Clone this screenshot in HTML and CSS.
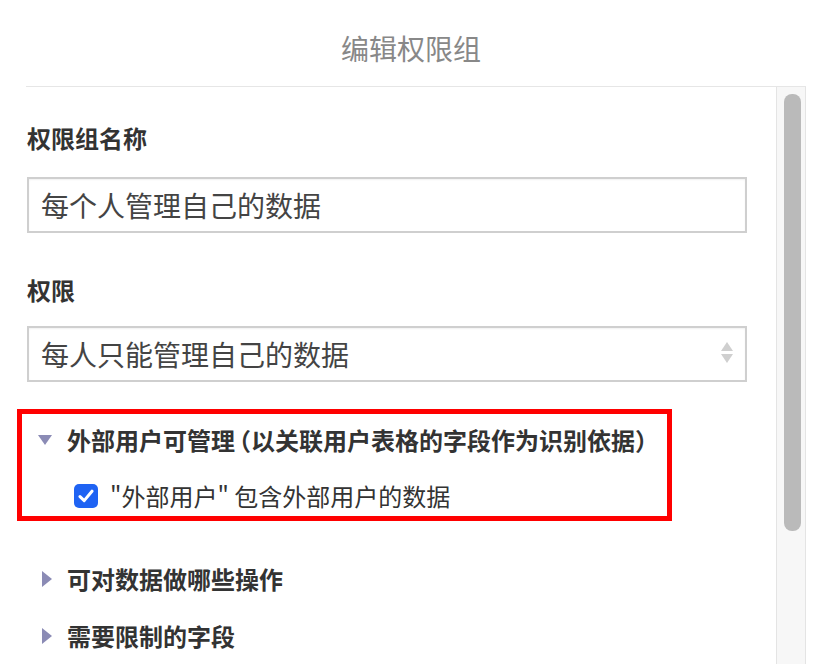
FILE: index.html
```
<!DOCTYPE html>
<html lang="zh-CN">

<head>
    <meta charset="UTF-8">
    <meta name="viewport" content="width=device-width, initial-scale=1.0">
    <title>编辑权限组</title>
    <link rel="stylesheet" href="styles.css">
</head>

<body>
    <div class="dialog">
        <h1 class="dialog-title">编辑权限组</h1>
        <div class="dialog-body">
            <div class="form">
                <label class="field-label" for="groupName">权限组名称</label>
                <input type="text" id="groupName" class="text-input" value="每个人管理自己的数据">

                <label class="field-label label-gap" for="scope">权限</label>
                <div class="select-wrap">
                    <select id="scope" class="select-input">
                        <option>每人只能管理自己的数据</option>
                        <option>所有人可以管理所有数据</option>
                    </select>
                    <span class="select-arrows"><i class="up"></i><i class="down"></i></span>
                </div>

                <!-- highlighted section -->
                <div class="annot">
                    <div class="section-head open">
                        <span class="caret"></span>
                        <span>外部用户可管理<span class="paren open-paren">（</span>以关联用户表格的字段作为识别依据<span class="paren">）</span></span>
                    </div>
                    <label class="check-row">
                        <span class="check-box">
                            <svg width="16" height="14" viewBox="0 0 16 14">
                                <path d="M2 7.6 L6.2 11.6 L14 2.2" fill="none" stroke="#fff" stroke-width="3" stroke-linecap="round" stroke-linejoin="round"/>
                            </svg>
                        </span>
                        "外部用户" 包含外部用户的数据
                    </label>
                </div>

                <div class="section-head first-closed">
                    <span class="caret"></span>
                    可对数据做哪些操作
                </div>
                <div class="section-head">
                    <span class="caret"></span>
                    需要限制的字段
                </div>
            </div>
            <div class="scrollbar">
                <div class="scroll-thumb"></div>
            </div>
        </div>
    </div>
</body>

</html>
```

FILE: styles.css
```
html, body {
    margin: 0;
    padding: 0;
    background: #fff;
}

body {
    font-family: "Noto Sans CJK SC", "Noto Sans", sans-serif;
    color: #333;
    overflow: hidden;
}

.dialog {
    width: 822px;
    height: 664px;
}

.dialog-title {
    margin: 0;
    height: 86px;
    padding-top: 28px;
    box-sizing: border-box;
    text-align: center;
    font-size: 28px;
    line-height: 40px;
    font-weight: normal;
    color: #888;
}

.dialog-body {
    margin-left: 26px;
    width: 780px;
    height: 578px;
    box-sizing: border-box;
    border-top: 1px solid #e6e6e6;
    display: flex;
}

.form {
    flex: 1;
    padding: 35px 0 0 1px;
    display: flex;
    flex-direction: column;
    align-items: flex-start;
}

/* scrollbar drawn as a plain track + thumb */
.scrollbar {
    width: 30px;
    box-sizing: border-box;
    background: #f7f7f7;
    border-left: 1px solid #e4e4e4;
    border-right: 1px solid #e4e4e4;
    padding: 7px 4px 0 7px;
}

.scroll-thumb {
    height: 437px;
    background: #bababa;
    border-radius: 8px;
}

.field-label {
    font-size: 24px;
    line-height: 32px;
    font-weight: bold;
    color: #333;
    margin-bottom: 23px;
}

.label-gap {
    margin-top: 41px;
    margin-bottom: 20px;
}

.text-input,
.select-input {
    width: 720px;
    height: 56px;
    box-sizing: border-box;
    border: 2px solid #cfcfcf;
    box-shadow: inset 0 1px 2px rgba(0, 0, 0, 0.06);
    padding: 0 12px;
    font-family: inherit;
    font-size: 28px;
    color: #444;
    background: #fff;
    outline: none;
}

.select-wrap {
    position: relative;
}

.select-input {
    appearance: none;
    -webkit-appearance: none;
    border-radius: 0;
}

.select-arrows {
    position: absolute;
    right: 14px;
    top: 16px;
    display: flex;
    flex-direction: column;
    gap: 3px;
    pointer-events: none;
}

.select-arrows i {
    width: 0;
    height: 0;
    border-left: 6px solid transparent;
    border-right: 6px solid transparent;
}

.select-arrows .up {
    border-bottom: 9px solid #cfcfcf;
}

.select-arrows .down {
    border-top: 9px solid #cfcfcf;
}

.annot {
    margin-top: 27px;
    margin-left: -10px;
    border: 5px solid #ff0000;
    padding: 10px 20px 4px 5px;
}

.section-head {
    display: flex;
    align-items: center;
    font-size: 24px;
    line-height: 32px;
    font-weight: bold;
    color: #333;
    margin-top: 25px;
}

/* half-width brackets */
.paren {
    font-feature-settings: "halt";
}

.open-paren {
    margin-left: 4px;
}

.annot .section-head {
    margin-top: 0;
}

.first-closed {
    margin-top: 42px;
}

.caret {
    width: 0;
    height: 0;
    margin-left: 15px;
    margin-right: 15px;
    border-top: 8px solid transparent;
    border-bottom: 8px solid transparent;
    border-left: 10px solid #8b8bb5;
}

.section-head.open .caret {
    margin-left: 11px;
    margin-right: 15px;
    border-left: 7px solid transparent;
    border-right: 7px solid transparent;
    border-top: 10px solid #8b8bb5;
    border-bottom: 0;
}

.check-row {
    display: flex;
    align-items: center;
    margin-top: 24px;
    margin-left: 47px;
    font-size: 24px;
    line-height: 32px;
    color: #333;
}

.check-box {
    width: 24px;
    height: 24px;
    border-radius: 5px;
    background: #1f63f3;
    display: flex;
    align-items: center;
    justify-content: center;
    margin-right: 12px;
}
```
